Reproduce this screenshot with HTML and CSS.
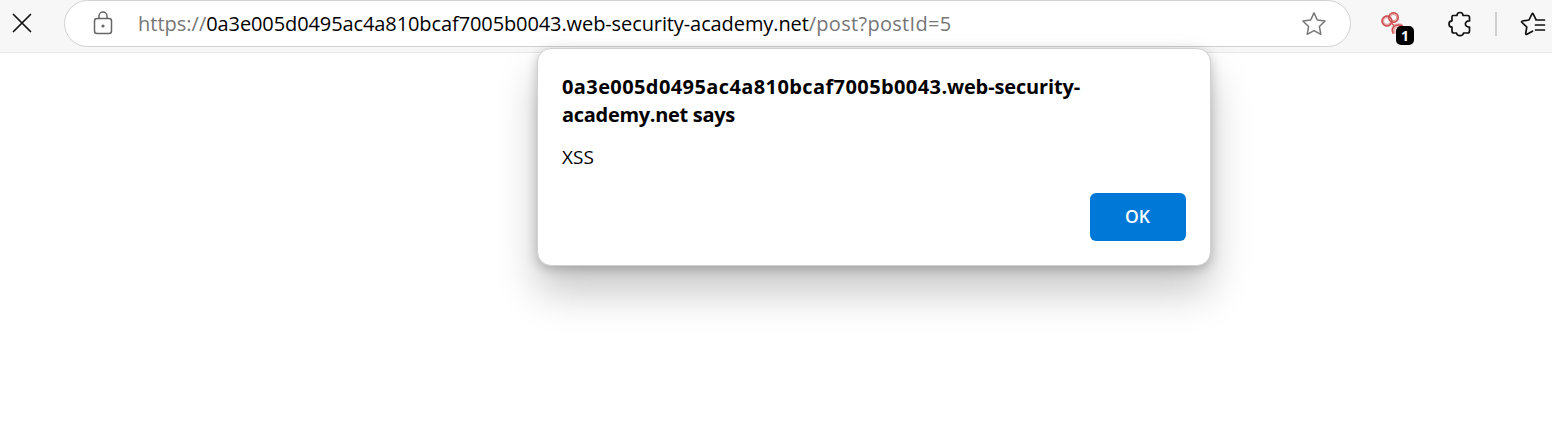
FILE: index.html
```html
<!DOCTYPE html>
<html lang="en">
<head>
<meta charset="utf-8">
<title>Post</title>
<link rel="stylesheet" href="styles.css">
</head>
<body>
<header class="toolbar">
  <button class="stop" aria-label="Stop loading">
    <svg width="20" height="20" viewBox="0 0 20 20"><path d="M1.500 1.500 18.500 18.500M18.500 1.500 1.500 18.500"/></svg>
  </button>
  <div class="address">
    <svg class="lock" width="20" height="24" viewBox="0 0 20 24"><rect x="1.500" y="7.500" width="17" height="15" rx="2.500"/><path d="M6 7.500V5a4 4 0 0 1 8 0v2.500"/><circle class="dot" cx="10" cy="15" r="1.600"/></svg>
    <div class="url"><span class="scheme">https://</span><span class="host">0a3e005d0495ac4a810bcaf7005b0043.web-security-academy.net</span><span class="path">/post?postId=5</span></div>
    <svg class="favorite" width="26" height="26" viewBox="0 0 26 26"><path d="M13 1.900 16.300 9 24.100 10 18.400 15.500 19.800 23.300 13 19.600 6.200 23.300 7.600 15.500 1.900 10 9.700 9Z"/></svg>
  </div>
  <div class="extension">
    <svg width="26" height="26" viewBox="0 0 26 26"><path class="halo" d="M14 22C11.500 18 15 14.500 21 15.500"/><path class="tail" d="M13 23C11 17.500 14.500 13.500 22 15.500M10.500 12l3 3"/><circle class="glow" cx="7" cy="11" r="4.300"/><circle class="glow" cx="13.500" cy="7.500" r="4"/><circle cx="7" cy="11" r="4.900"/><circle cx="13.500" cy="7.500" r="4.700"/></svg>
    <span class="badge">1</span>
  </div>
  <svg class="puzzle" width="24" height="26" viewBox="0 0 24 26"><path d="M5 4.500H9C9 .5 15 .5 15 4.500H19.500Q21.500 4.500 21.500 6.500V10C16 9.500 16 16.500 21.500 16V20Q21.500 22 19.500 22H15.500C15 25.500 9 25.500 8.500 22H6Q4 22 4 20V16.200C0 16 0 10 4 9.800V6.500Q4 4.500 5 4.500Z"/></svg>
  <span class="divider"></span>
  <svg class="collections" width="26" height="26" viewBox="0 0 26 26"><path d="M16 8.700 13.300 3.100Q12.600 1.800 11.900 3.100L9 9 2.500 10Q1 10.400 2 11.500L6.800 16 5.700 22.400Q5.600 23.900 7 23.200L12.500 20.200M16 9H24.500M15.500 14H24.500M15.500 19H24.500"/></svg>
</header>
<main class="page">
  <section class="dialog" role="dialog" aria-modal="true">
    <h1 class="title"><span class="title-id">0a3e005d0495ac4a810bcaf7005b0043</span><span class="title-domain">.web-security-</span><br><span class="title-end">academy.net says</span></h1>
    <p class="message">XSS</p>
    <button class="ok">OK</button>
  </section>
</main>
</body>
</html>
```
FILE: styles.css
```css
* { box-sizing: border-box; }
body {
  margin: 0;
  height: 421px;
  overflow: hidden;
  background: #fff;
  font-family: "Open Sans", "Noto Sans", sans-serif;
}
svg { display: block; flex: none; fill: none; stroke: #111; stroke-width: 1.7; stroke-linecap: round; stroke-linejoin: round; }
.toolbar {
  display: flex;
  height: 53px;
  padding-left: 12px;
  align-items: flex-start;
  background: #f7f7f7;
  border-bottom: 1px solid #e9e9e9;
}
.stop { width: 20px; margin-top: 13px; padding: 0; border: 0; background: none; }
.address {
  display: flex;
  align-items: center;
  width: 1287px;
  height: 47px;
  margin-left: 32px;
  padding: 0 23px 0 28px;
  background: #fff;
  border: 1px solid #d2d2d2;
  border-radius: 24px;
}
.lock { stroke: #666; stroke-width: 1.5; margin-top: -1px; }
.lock .dot { fill: #666; stroke: none; }
.url { flex: 1; margin-left: 25px; font-size: 20px; line-height: 28px; white-space: nowrap; color: #767676; }
.host { color: #000; letter-spacing: -.1px; }
.path { letter-spacing: .3px; }
.favorite { stroke: #777; stroke-width: 1.5; }
.extension { position: relative; width: 34px; height: 36px; margin: 10px 0 0 29px; }
.extension svg { stroke: #cc5050; stroke-width: 1.5; }
.extension .glow { fill: #fff; stroke: #e9a5a5; stroke-width: 3; }
.extension .halo { stroke: #eeb5b5; stroke-width: 4; }
.badge {
  position: absolute;
  left: 16px;
  top: 16px;
  width: 18px;
  height: 19px;
  border-radius: 5px;
  background: #000;
  color: #fff;
  font-size: 14px;
  font-weight: 700;
  line-height: 20px;
  text-align: center;
}
.puzzle { margin: 11px 0 0 34px; }
.divider { width: 2px; height: 24px; margin: 12px 0 0 23px; background: #d0d0d0; }
.collections { margin: 11px 0 0 23px; }
.page { display: flex; justify-content: center; height: 368px; padding-left: 196px; }
.dialog {
  display: flex;
  flex-direction: column;
  position: relative;
  width: 674px;
  height: 218px;
  margin-top: -5px;
  padding: 24px;
  background: #fff;
  border: 1px solid #d0d0d0;
  border-radius: 14px;
  box-shadow: 0 26px 40px rgba(0,0,0,.22), 0 3px 12px rgba(0,0,0,.22);
}
.title { margin: 0; font-size: 20px; line-height: 28px; font-weight: 700; white-space: nowrap; }
.title-id { letter-spacing: .4px; }
.title-domain { letter-spacing: -.13px; }
.title-end { letter-spacing: -.3px; }
.message { margin: 14px 0 0; font-size: 19px; line-height: 28px; }
.ok {
  align-self: flex-end;
  width: 96px;
  height: 48px;
  margin-top: 22px;
  padding: 0 1px 2px 0;
  border: 0;
  border-radius: 6px;
  background: #0078d7;
  color: #fff;
  font: 600 17.5px "Open Sans", "Noto Sans", sans-serif;
}
```
